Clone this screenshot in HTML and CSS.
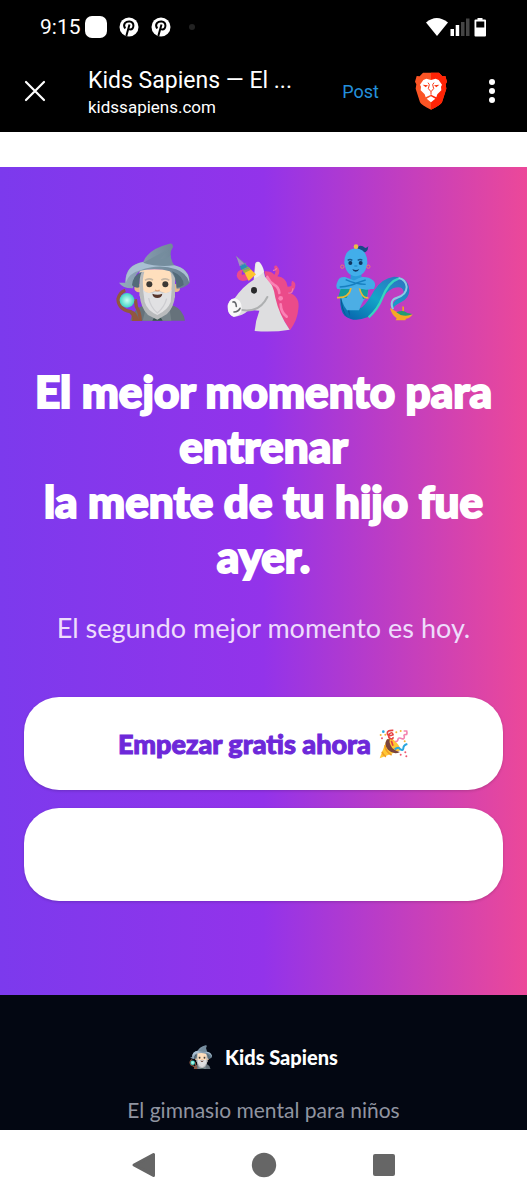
FILE: index.html
```
<!DOCTYPE html>
<html lang="es">
<head>
  <meta charset="utf-8">
  <meta name="viewport" content="width=device-width, initial-scale=1">
  <title>Kids Sapiens</title>
  <link rel="stylesheet" href="styles.css">
</head>
<body>
  <header class="browser">
    <div class="status">
      <span class="time">9:15</span>
      <span class="app-dot"></span>
      <svg class="pin" viewBox="0 0 20 20"><circle cx="10" cy="10" r="9.5" fill="#fff"/><path d="M6.2 11.5C3.2 7 7 4.2 10.5 4.4c5.4.3 4.8 8.2.8 8.2-1.1 0-1.8-.7-2-1.2M10.5 7.5 7.3 19" fill="none" stroke="#000" stroke-width="2"/></svg>
      <svg class="pin" viewBox="0 0 20 20"><circle cx="10" cy="10" r="9.5" fill="#fff"/><path d="M6.2 11.5C3.2 7 7 4.2 10.5 4.4c5.4.3 4.8 8.2.8 8.2-1.1 0-1.8-.7-2-1.2M10.5 7.5 7.3 19" fill="none" stroke="#000" stroke-width="2"/></svg>
      <span class="more-dot"></span>
      <svg class="signals" viewBox="0 0 62 20">
        <path d="M1 5.500Q11.500-3.500 23 5.500L12 19Z" fill="#fff"/>
        <path d="M25.500 12h3.500v7h-3.500zM30.700 8h3.500v11h-3.500z" fill="#fff"/>
        <path d="M36 5h3.500v14H36zM41 1.500h3.500V19H41z" fill="#444"/>
        <path d="M52.500 1h5v1.500H60q1 0 1 1v15q0 1-1 1H50.500q-1 0-1-1v-15q0-1 1-1h2zM51.300 4.500v6h8v-6z" fill="#fff" fill-rule="evenodd"/>
      </svg>
    </div>
    <div class="toolbar">
      <button class="icon-btn close" aria-label="Cerrar">
        <svg width="22" height="22" viewBox="0 0 22 22"><path d="M2 2l18 18M20 2L2 20" stroke="#fff" stroke-width="2.200" stroke-linecap="round"/></svg>
      </button>
      <div class="page-info">
        <div class="page-title">Kids Sapiens — El ...</div>
        <div class="page-url">kidssapiens.com</div>
      </div>
      <a class="post" href="#">Post</a>
      <button class="icon-btn brave" aria-label="Brave">
        <svg width="32" height="38" viewBox="450 214 96 114">
          <path d="M474 216h48l10 11 9-1 5 17-4 8 2 13-13 41q-4 9-33 22-29-13-33-22l-13-41 2-13-4-8 5-17 9 1z" fill="#fb5424"/>
          <path d="M498 216h24l10 11 9-1 5 17-4 8 2 13-13 41q-4 9-33 22z" fill="#ff2406"/>
          <path d="M484 234l14 4 14-4 9 4 10 14-3 6 1 11-12 12-3 9-16-8-16 8-3-9-12-12 1-11-3-6 10-14z" fill="#fff"/>
          <path d="M473 252l16 2-7 6zM523 252l-16 2 7 6z" fill="#fb3511"/>
          <path d="M489 246l4 6-3 12 8 9 8-9-3-12 4-6M498 273v9" fill="none" stroke="#fb3511" stroke-width="3"/>
          <path d="M485 294l13-7 13 7-13 11z" fill="#fff"/>
        </svg>
      </button>
      <button class="icon-btn menu" aria-label="Menú">
        <svg width="8" height="26" viewBox="0 0 8 26" fill="#fff"><circle cx="4" cy="4" r="3"/><circle cx="4" cy="13" r="3"/><circle cx="4" cy="22" r="3"/></svg>
      </button>
    </div>
  </header>

  <main class="page">
    <section class="hero">
      <div class="characters">
        <svg class="character" viewBox="27 39 234 234" role="img" aria-label="Mago">
          <defs>
            <linearGradient id="hat" x1="0" x2="1"><stop offset="0" stop-color="#94aabd"/><stop offset="1" stop-color="#667d8e"/></linearGradient>
            <radialGradient id="orb"><stop offset="0" stop-color="#c8fff5"/><stop offset="1" stop-color="#3fd3c3"/></radialGradient>
            <symbol id="wizard" viewBox="27 39 234 234">
              <path d="M73 272q7-34 37-45l93 0q28 11 34 45z" fill="#66727b"/>
              <path d="M110 272l9-36 35 22 36-26 6 40z" fill="#78858c"/>
              <path d="M139 272l15-26 16 26z" fill="#38514f"/>
              <circle cx="98" cy="174" r="13" fill="#e6b88d"/><circle cx="210" cy="174" r="12" fill="#e6b88d"/>
              <path d="M101 118h106v80q-14 40-53 40t-53-40z" fill="#ffdfbd"/>
              <path d="M101 125h14q-7 20-3 55 6 12 22 8 20-8 40 0 16 4 22-8 4-35-3-55h14v72q-3 35-24 55l-29 17-28-14q-22-20-25-62z" fill="#b9bbbd"/>
              <path d="M111 178q7 14 27 10 16-6 32 0 20 4 27-10l-3 38q-9 25-40 39-30-13-38-39z" fill="#e1e1e3"/>
              <path d="M128 204q5 27 26 45 21-17 28-43" fill="none" stroke="#cdcdd1" stroke-width="4"/>
              <path d="M117 151q11-8 24-1M166 150q13-7 24 1" fill="none" stroke="#c8b7a5" stroke-width="5"/>
              <circle cx="130" cy="163" r="9" fill="#3d3935"/><circle cx="178" cy="163" r="9" fill="#3d3935"/>
              <path d="M147 180q7 5 14 0" fill="none" stroke="#e1a579" stroke-width="4"/>
              <path d="M139 191q15 6 30 0-2 13-15 13t-15-13" fill="#57352b"/>
              <path d="M58 158Q57 104 112 95 128 57 188 42q12-5 13 9-8 12-7 24 2 23 10 31 49 12 47 52-14 17-39 18-2-43-21-52-43-13-90-1-19 14-20 52-30 1-42-17z" fill="url(#hat)"/>
              <path d="M59 158q-1-53 53-62 45-8 91 9 49 12 47 53-8-29-40-40-51-18-107 3-33 8-44 37" fill="#a9bfd2"/>
              <path d="M78 166q3-31 29-40-8 18-7 46-12 4-22-6M233 165q0-27-35-41 13 19 14 49 13-1 21-8" fill="#536a79"/>
              <path d="M111 98q44 14 94 8-10-12-11-31-15 14-32 13l27-31" fill="#758d9e"/>
              <path d="M58 181q-16 4-22 26 1 31 37 38 14 11 10 28h20q-1-27-12-43l-3-22" fill="none" stroke="#91573f" stroke-width="10"/>
              <path d="M72 240q20 2 28 32H84q0-16-16-26z" fill="#91573f"/>
              <circle cx="63" cy="211" r="22" fill="url(#orb)"/>
            </symbol>
          </defs>
          <use href="#wizard" x="27" y="39" width="234" height="234"/>
        </svg>
        <svg class="character unicorn" viewBox="30 79 234 234" role="img" aria-label="Unicornio">
          <path d="M148 128q21-1 30 10 7-9 0-19-2-10 7-8 15 15 2 32 28 3 31 31 15 0 11-9l2-9q14 4 9 21-5 13-20 14 36 12 30 50-2 32-25 64l-57-91z" fill="#eb4b8a"/>
          <path d="M103 152q-31 13-38-10-1-18 23-21-11 9-7 18 7-5 17 0z" fill="#eb4b8a"/>
          <path d="M119 307q3-33 14-61-18-3-34 0-15 14-42 19-22-10-19-36 3-13 21-20 24-36 57-56l4-43q0-12 9-11 15 13 21 45 26 21 31 63 11 50 43 96-51 9-105 4z" fill="#dedee0"/>
          <path d="M122 108q5-12 11-8 11 11 14 29l-18 15-11 5z" fill="#efeff0"/>
          <path d="M81 244q53 8 76-39" fill="none" stroke="#aeb0b1" stroke-width="6" stroke-linecap="round"/>
          <path d="M39 243q-2-33 21-34 20 5 20 28 1 23-25 27-15-7-16-21" fill="#f8f8f8"/>
          <path d="M54 220q9-2 10 13M57 250q13-1 18-11" fill="none" stroke="#66696c" stroke-width="5" stroke-linecap="round"/>
          <ellipse cx="117" cy="185" rx="9" ry="10" fill="#292a2b"/>
          <path d="M64 83l59 54-22 20z" fill="#ffc52d"/>
          <path d="M64 83l44 40-21 11z" fill="#9cb53e"/>
          <path d="M64 83l35 31-20 10z" fill="#298eb9"/>
          <path d="M64 83l24 22-14 8z" fill="#a78ac5"/>
          <path d="M76 110l18-7M84 124l20-7" stroke="#6b8dac" stroke-width="3"/>
          <path d="M157 145q8 16 20 23 14 6 16 25M197 227q1 24 18 37" fill="none" stroke="#fa82b5" stroke-width="8" stroke-linecap="round"/>
          <circle cx="197" cy="209" r="7" fill="#fa82b5"/><path d="M174 125q8 1 11-6M220 193q13 2 14-14" fill="none" stroke="#f576a8" stroke-width="4"/>
        </svg>
        <svg class="character" viewBox="30 39 234 234" role="img" aria-label="Genio">
          <defs><linearGradient id="tail" x1="0" x2="1" y1="1" y2="0"><stop offset="0" stop-color="#075caa"/><stop offset=".5" stop-color="#13a4c8"/><stop offset="1" stop-color="#326bc0"/></linearGradient></defs>
          <path d="M46 190q-4 49 13 67 27 22 68 5 22-14 42-50 14-28 35-37 28-10 32 10 0 10-15 19-21 12-18 32 8-12 26-20 23-12 24-34-2-42-46-42-36 4-60 42-17 32-36 50-12 9-26-6z" fill="url(#tail)"/>
          <path d="M131 262q28-25 41-59 18-48 50-58" fill="none" stroke="#37d4c0" stroke-width="7"/>
          <path d="M204 238q-12-28 12-35 28-8 29-32-2-23-24-27" fill="none" stroke="#8ccbe4" stroke-width="6"/>
          <path d="M49 197q1 39 18 65-20-21-20-65M72 202q-10 24 2 57" fill="#07548f"/>
          <path d="M43 170h83q9 22-6 36-8 8-18 35H66q-18-21-23-71" fill="#4caee5"/>
          <path d="M47 176l31 1-13 27H39zM105 176h25l-4 28-12 3z" fill="#159c99"/>
          <path d="M78 174q-6 31-42 29M103 173q8 34 27 30" fill="none" stroke="#edb434" stroke-width="5"/>
          <path d="M77 129h32l2 30H76z" fill="#2c9adb"/>
          <path d="M96 53q10-12 25 1 7-2 9-6 0 12-8 18l-21 5z" fill="#174886"/>
          <path d="M58 97q0-39 34-42 34 2 35 42-3 39-34 42-31-2-35-42" fill="#42aeea"/>
          <circle cx="93" cy="50" r="7" fill="#edbd45"/>
          <path d="M68 91q7-5 14 0M98 91q8-5 14 0" fill="none" stroke="#17568b" stroke-width="4"/>
          <circle cx="76" cy="99" r="6" fill="#10365f"/><circle cx="107" cy="99" r="6" fill="#10365f"/>
          <path d="M82 117q11 6 21 0-3 8-11 8t-10-8" fill="#123a65"/><path d="M88 108h9" stroke="#1684c4" stroke-width="3"/>
          <circle cx="52" cy="110" r="5" fill="none" stroke="#e48171" stroke-width="3"/><circle cx="130" cy="110" r="5" fill="none" stroke="#e48171" stroke-width="3"/>
          <path d="M38 154q4-14 22-13l39 15q8 5 24 0l25 5q-1 18-25 18l-41-8-44 6q-8-6 0-23" fill="#44afe8"/>
          <path d="M61 165q30-17 50-24 21-1 33 10 11 10 3 26l-23-1-28-10-27 11-33-1 1-9z" fill="#42ace7"/>
          <path d="M44 171q34-2 54-13l24-8M62 149q30 14 60 14" fill="none" stroke="#167fc0" stroke-width="4"/>
          <path d="M195 234q18 10 26 15 27 10 42 4-7 12-20 13l-2 5h-29l3-6q-15-10-20-31" fill="#f6a727"/>
          <path d="M214 247q20-9 33 2l15 3q-14 8-35 3z" fill="#249c72"/><path d="M232 243v-14l5 1v13" fill="#f19f26"/>
        </svg>
      </div>
      <h1 class="headline">El mejor momento para entrenar<br>la mente de tu hijo fue ayer.</h1>
      <p class="subtitle">El segundo mejor momento es hoy.</p>
      <div class="actions">
        <button class="cta">Empezar gratis ahora
          <svg class="party" viewBox="0 0 90 90" aria-hidden="true">
            <path d="M24 31q9-5 18 0 20 16 23 33L2 88z" fill="#ffc734"/>
            <path d="M24 31q-11 16 3 31 17 17 36 7-22-6-27-18-7-12-3-20z" fill="#78433e"/>
            <path d="M18 49q1 20 20 29M9 68q3 11 12 15" fill="none" stroke="#f09b24" stroke-width="5"/>
            <path d="M43 4q-20-1-18 11 3 9 17 2-2-11-12-1-5 12 9 14 4-1 3-6M37 35l5 15" fill="none" stroke="#e64142" stroke-width="5"/>
            <path d="M48 37q7 2 9-5 0-7 8-4 12 5 11-5-4-7 7-7 2-4 0-10h-9" fill="none" stroke="#f485b1" stroke-width="5"/>
            <path d="M47 61q12-9 16-1 9 7 10-2 0-10 12-13" fill="none" stroke="#2aa6df" stroke-width="6"/>
            <g fill="#f7b536"><circle cx="5" cy="18" r="3"/><circle cx="19" cy="17" r="3"/><circle cx="52" cy="10" r="3"/><circle cx="65" cy="6" r="3"/><circle cx="77" cy="37" r="3"/></g>
            <g fill="#ee5770"><circle cx="9" cy="28" r="3"/><circle cx="65" cy="77" r="3"/><circle cx="79" cy="70" r="3"/><circle cx="82" cy="82" r="3"/></g><circle cx="13" cy="8" r="4" fill="#2aa6df"/>
          </svg>
        </button>
        <button class="cta" aria-label="Más opciones"></button>
      </div>
    </section>
    <footer class="footer">
      <div class="brand">
        <svg class="brand-icon" viewBox="27 39 234 234" aria-hidden="true"><use href="#wizard" x="27" y="39" width="234" height="234"/></svg>
        <span>Kids Sapiens</span>
      </div>
      <p class="tagline">El gimnasio mental para niños</p>
    </footer>
  </main>

  <nav class="navbar">
    <button class="icon-btn" aria-label="Atrás"><svg width="26" height="26" viewBox="0 0 26 26"><path d="M3 13L22.500 2.500v21z" fill="#666" stroke="#666" stroke-width="3" stroke-linejoin="round"/></svg></button>
    <button class="icon-btn" aria-label="Inicio"><svg width="26" height="26" viewBox="0 0 26 26"><circle cx="13" cy="13" r="12.200" fill="#666"/></svg></button>
    <button class="icon-btn" aria-label="Recientes"><svg width="26" height="26" viewBox="0 0 26 26"><rect x="2" y="2" width="22" height="22" rx="2" fill="#666"/></svg></button>
  </nav>
</body>
</html>
```

FILE: styles.css
```
* {
  box-sizing: border-box;
}
body {
  margin: 0;
  min-height: 100vh;
  display: flex;
  flex-direction: column;
  background-color: #fff;
  font-family: Lato, sans-serif;
}
button {
  border: none;
  font-family: inherit;
  cursor: pointer;
}
svg {
  display: block;
}
.browser {
  background-color: #000;
  color: #fff;
  font-family: Roboto, sans-serif;
}
.status {
  display: flex;
  align-items: center;
  height: 54px;
  padding: 0 40px;
}
.time {
  font-size: 21px;
  width: 45px;
}
.app-dot {
  width: 22px;
  height: 22px;
  border-radius: 7px;
  background-color: #fff;
}
.pin {
  width: 20px;
  height: 20px;
  margin-left: 12px;
}
.more-dot {
  width: 6px;
  height: 6px;
  margin-left: 18px;
  border-radius: 50%;
  background-color: #222;
}
.signals {
  width: 62px;
  height: 20px;
  margin-left: auto;
}
.toolbar {
  display: flex;
  align-items: center;
  height: 78px;
  padding: 0 31px 4px 24px;
}
.icon-btn {
  background: none;
  padding: 0;
}
.page-info {
  flex: 1;
  min-width: 0;
  margin-left: 42px;
  padding-top: 3px;
}
.page-title {
  font-size: 23px;
  line-height: 28px;
  white-space: nowrap;
}
.page-url {
  font-size: 17px;
  line-height: 24px;
}
.post {
  color: #2490db;
  font-size: 18px;
  text-decoration: none;
}
.brave {
  margin-left: 36px;
}
.menu {
  margin-left: 41px;
}
.page {
  flex: 1;
  display: flex;
  flex-direction: column;
  padding-top: 35px;
}
.hero {
  padding: 76px 24px 94px;
  background: linear-gradient(to right, #7c3aed, #9333ea 50%, #ec4899);
  color: #fff;
  text-align: center;
}
.characters {
  display: flex;
  justify-content: center;
  gap: 32px;
  height: 90px;
}
.character {
  width: 78px;
  height: 78px;
}
.unicorn {
  align-self: flex-end;
}
.headline {
  margin: 31px 0 26px;
  font-size: 44px;
  line-height: 55px;
  font-weight: 900;
  -webkit-text-stroke: 2px #fff;
}
.subtitle {
  margin: 0 0 51px;
  font-size: 27px;
  line-height: 36px;
  color: #eedcfc;
}
.actions {
  display: flex;
  flex-direction: column;
  gap: 18px;
}
.cta {
  display: flex;
  align-items: center;
  justify-content: center;
  gap: 8px;
  width: 100%;
  height: 93px;
  border-radius: 35px;
  background-color: #fff;
  box-shadow: 0 1px 3px rgba(0, 0, 0, 0.18);
  color: #6d28d9;
  font-size: 27px;
  font-weight: 900;
  -webkit-text-stroke: 1px #6d28d9;
}
.party {
  width: 30px;
  height: 30px;
}
.footer {
  flex: 1;
  padding: 48px 24px 6px;
  background-color: #030712;
  text-align: center;
}
.brand {
  display: flex;
  align-items: center;
  justify-content: center;
  gap: 12px;
  height: 28px;
  color: #fff;
  font-size: 20px;
  font-weight: 900;
}
.brand-icon {
  width: 24px;
  height: 24px;
}
.tagline {
  margin: 25px 0 0;
  font-size: 21px;
  line-height: 28px;
  color: #9094a0;
}
.navbar {
  display: flex;
  align-items: center;
  justify-content: center;
  gap: 94px;
  height: 70px;
  background-color: #fff;
}
```
